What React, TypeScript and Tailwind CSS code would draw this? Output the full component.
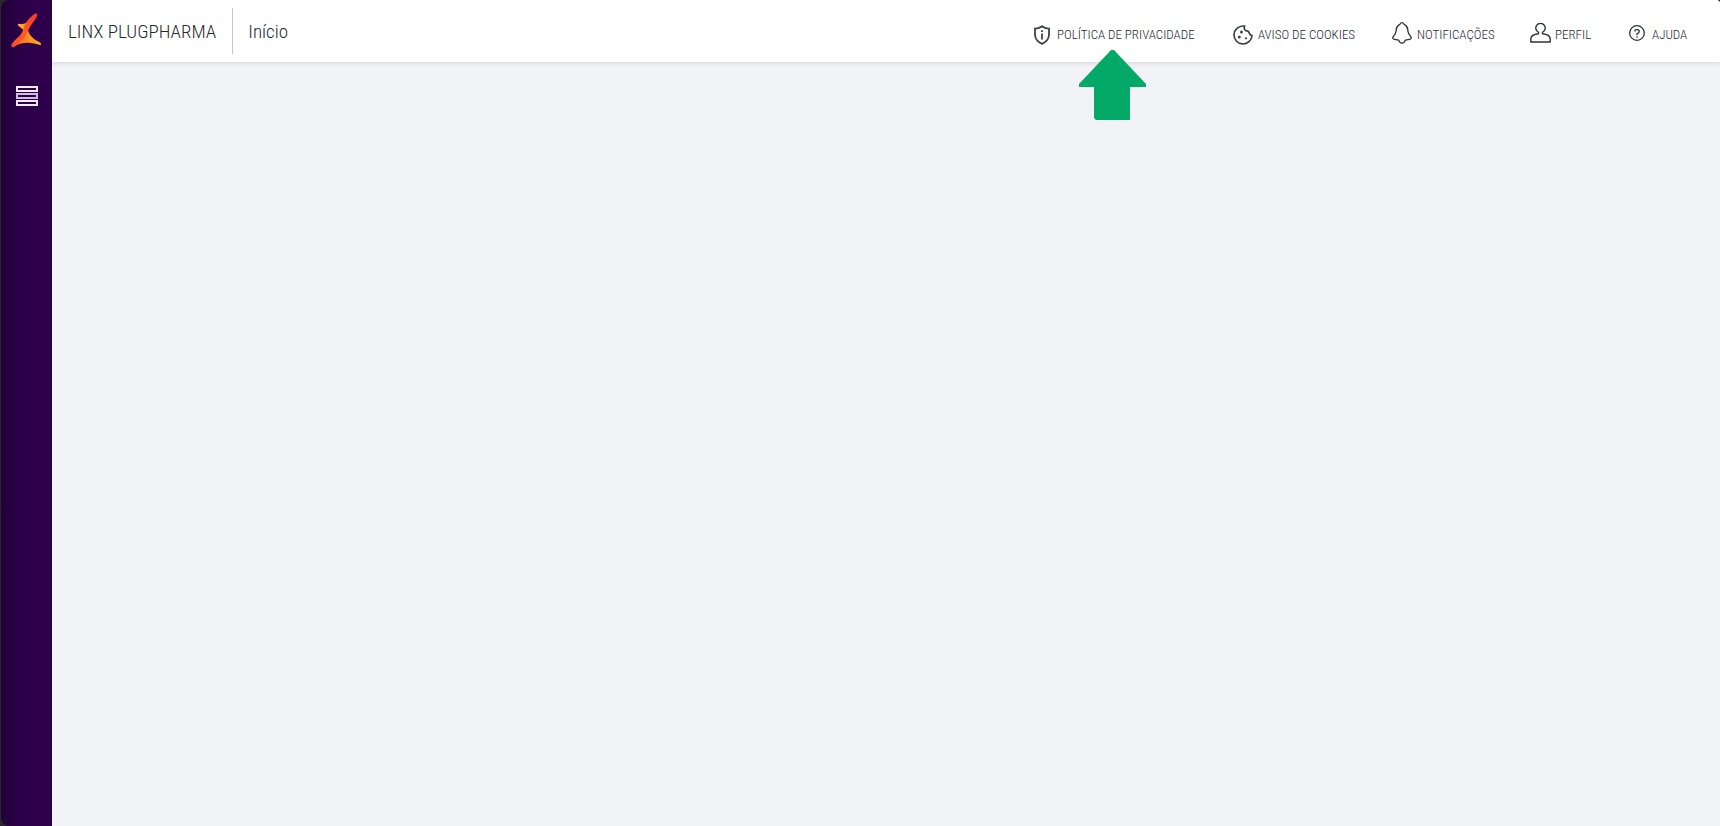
import type { ReactNode } from 'react';

type NavItemProps = {
  label: string;
  className: string;
  icon: ReactNode;
  children?: ReactNode;
};

function NavItem({ label, className, icon, children }: NavItemProps) {
  return (
    <li className={className}>
      <a href="#" className="flex h-6 items-center text-[13px] leading-5 whitespace-nowrap text-[#25292e]">
        {icon}
        <span>{label}</span>
      </a>
      {children}
    </li>
  );
}

function Logo() {
  return (
    <svg viewBox="0 0 31 35" className="h-[35px] w-[31px]" aria-hidden="true">
      <defs>
        <linearGradient id="logoRed" x1="0" y1="1" x2="1" y2="0">
          <stop offset="0" stopColor="#fb4a2a" />
          <stop offset="0.5" stopColor="#ff5a26" />
          <stop offset="1" stopColor="#f5372c" />
        </linearGradient>
        <linearGradient id="logoOrange" x1="0" y1="0" x2="1" y2="0">
          <stop offset="0.3" stopColor="#ff7a22" />
          <stop offset="1" stopColor="#ffb11f" />
        </linearGradient>
      </defs>
      <path d="M7.500 10.700C12 11.500 16 10.500 19 7L14 19C12.500 16.500 9.500 14.500 7.500 13Q6 11 7.500 10.700Z" fill="#ffa51f" />
      <path d="M13 17L17 17C18 22 22 26 29.500 29.800Q31 32 29 32C22 30 13 27.500 3 33.500Z" fill="url(#logoOrange)" />
      <path d="M23.500 .8Q26.500 0 26.200 2.500C24 8 19 12 17 18C15 24 8 30 3 34Q0 35 .5 31.500C4 26 10 23 12 17.500C13 11.500 17 6 23.500 .8Z" fill="url(#logoRed)" />
    </svg>
  );
}

function ShieldIcon() {
  return (
    <svg viewBox="0 0 16 20" className="mr-[7px] h-5 w-4" fill="none" stroke="#3d4045" strokeWidth="1.8" aria-hidden="true">
      <path d="M8 1.200Q11.500 3.600 15 3.700V10Q14.500 16 8 18.800Q1.500 16 1 10V3.700Q4.500 3.600 8 1.200Z" />
      <path d="M8 5.200V7M8 8.500V14.500" />
    </svg>
  );
}

function CookieIcon() {
  return (
    <svg viewBox="0 0 20 20" className="mr-[5px] size-5" fill="none" stroke="#3d4045" strokeWidth="1.7" aria-hidden="true">
      <path d="M10.500 1A9 9 0 1 0 19 10.500Q17 10.500 16.500 8.500L15.500 6.500L12.500 5.500Q10.500 3.500 11.500 1Z" />
      <g fill="#3d4045" stroke="none">
        <circle cx="8.500" cy="7" r="1.500" />
        <circle cx="6.300" cy="12" r="1.500" />
        <circle cx="13" cy="13.300" r="1.100" />
      </g>
    </svg>
  );
}

function BellIcon() {
  return (
    <svg viewBox="0 0 20 22" className="mr-[5px] mb-1 h-[22px] w-5" fill="none" stroke="#2f3338" strokeWidth="1.3" strokeLinejoin="round" aria-hidden="true">
      <path d="M7.800 2.300Q10 -1 12.200 2.300C15.500 4 15.800 6 16 9.500C16.200 12 18 13.500 19.200 15.300Q19.600 17 17.500 17.300L13.300 18.200Q12.500 21.200 10 21.200Q7.500 21.200 6.700 18.200L2.500 17.300Q.4 17 .8 15.300C2 13.500 3.800 12 4 9.500C4.200 6 4.500 4 7.800 2.300Z" />
    </svg>
  );
}

function UserIcon() {
  return (
    <svg viewBox="0 0 21 20" className="mr-1 mb-1 h-5 w-[21px]" fill="none" stroke="#2f3338" strokeWidth="1.4" strokeLinejoin="round" aria-hidden="true">
      <path d="M8.500 10.800V9.300A4.700 4.700 0 1 1 12.500 9.300V10.800Q20 11.500 20.200 16V19H.8V16Q1 11.500 8.500 10.800Z" />
    </svg>
  );
}

function HelpIcon() {
  return (
    <svg viewBox="0 0 16 16" className="mr-[7px] mb-1 size-4" fill="none" stroke="#2f3338" strokeWidth="1.3" aria-hidden="true">
      <circle cx="8" cy="8" r="7.300" />
      <path d="M5.800 6.500Q5.800 4.700 8 4.700Q10.300 4.700 10.300 6.500Q10.300 8 8 8.700V10.200M8 11.300V12.800" />
    </svg>
  );
}

export default function App() {
  return (
    <div className="flex min-h-screen bg-[#29292b] pl-px font-['Roboto_Condensed','Roboto',sans-serif]">
      <aside className="flex w-[51px] shrink-0 flex-col items-center rounded-l-lg bg-linear-to-r from-[#22023a] to-[#2e004b] to-50% pt-[13px]">
        <a href="#" aria-label="Linx">
          <Logo />
        </a>
        <button type="button" aria-label="Menu" className="mt-[38px] flex cursor-pointer flex-col gap-px">
          <span className="h-1.5 w-[22px] border-2 border-[#f1e9f7]" />
          <span className="h-1.5 w-[22px] border-2 border-[#cfc0dc]" />
          <span className="h-1.5 w-[22px] border-2 border-[#f1e9f7]" />
        </button>
      </aside>

      <div className="flex min-w-0 flex-1 flex-col rounded-tr-sm bg-[#f1f3f7]">
        <header className="flex h-[62px] items-center justify-between rounded-tr-sm bg-white pr-[30px] pl-4 shadow-[0_1px_5px_rgba(0,0,0,0.12)]">
          <div className="flex items-center text-[19px] font-light text-[#25292e]">
            <span className="pt-0.5 pr-4">LINX PLUGPHARMA</span>
            <h1 className="flex h-[46px] items-center border-l border-[#c4c6ca] pt-0.5 pl-[15px]">Início</h1>
          </div>

          <nav>
            <ul className="flex items-center gap-[34px] pt-2 font-light">
              <NavItem label="POLÍTICA DE PRIVACIDADE" className="relative min-w-[165px]" icon={<ShieldIcon />}>
                {/* highlight arrow under the link */}
                <svg viewBox="0 0 67 70" className="absolute top-[27px] left-[45px] h-[70px] w-[67px]" aria-hidden="true">
                  <path d="M32 0H35L67 34V37H51V70H17L15 68V37H0V34Z" fill="#04a867" />
                </svg>
              </NavItem>
              <NavItem label="AVISO DE COOKIES" className="min-w-[125px]" icon={<CookieIcon />} />
              <NavItem label="NOTIFICAÇÕES" className="min-w-[104px]" icon={<BellIcon />} />
              <NavItem label="PERFIL" className="min-w-[65px]" icon={<UserIcon />} />
              <NavItem label="AJUDA" className="min-w-[61px]" icon={<HelpIcon />} />
            </ul>
          </nav>
        </header>

        <main className="flex-1" />
      </div>
    </div>
  );
}
